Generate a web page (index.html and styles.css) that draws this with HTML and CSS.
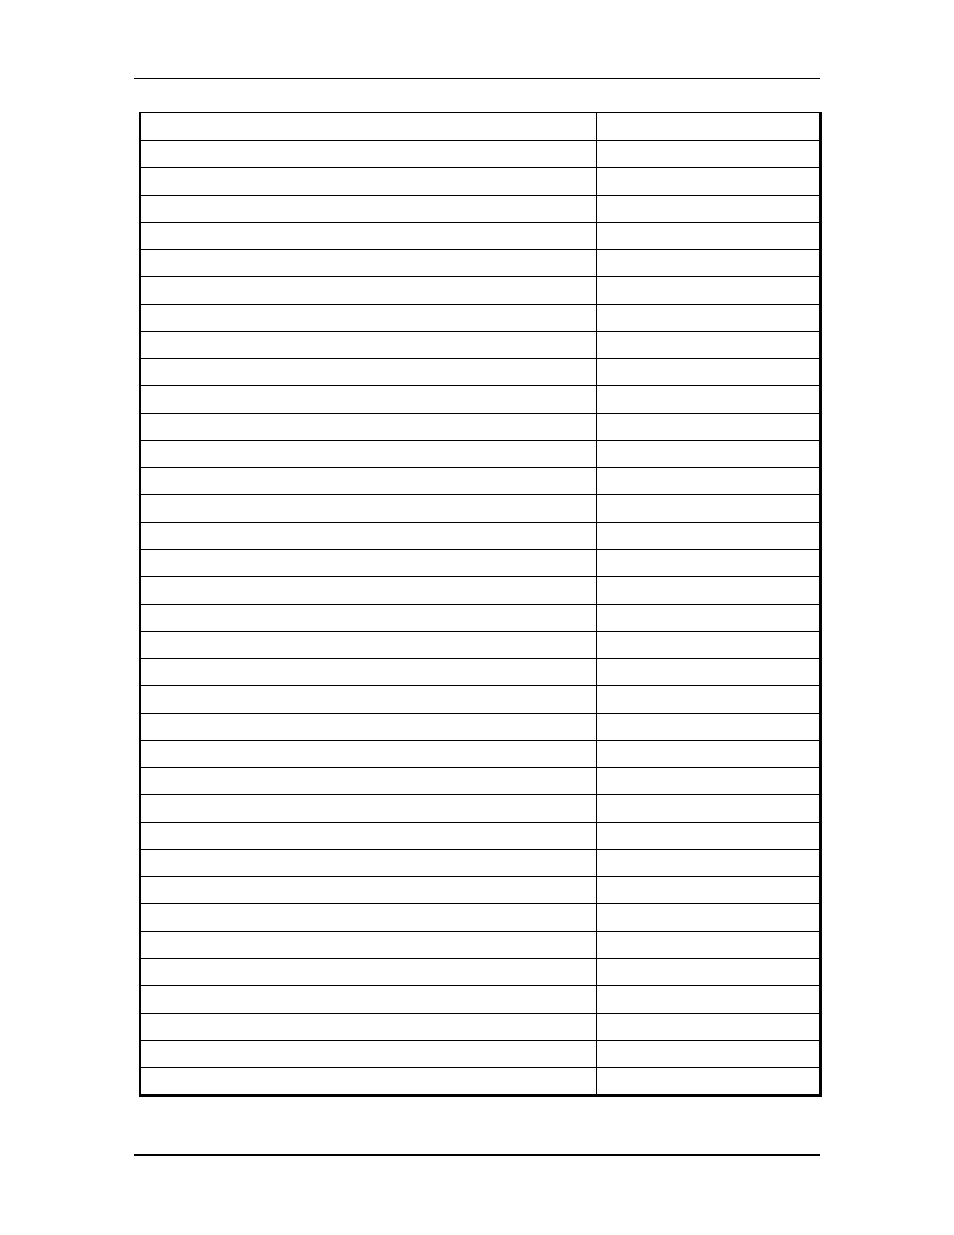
FILE: index.html
```html
<!DOCTYPE html>
<html>
<head>
<meta charset="utf-8">
<link rel="stylesheet" href="styles.css">
</head>
<body>
<div class="page">
  <div class="rule-top"></div>
  <div class="sheet">
    <div class="row"><div class="c1"></div><div class="c2"></div></div>
    <div class="row"><div class="c1"></div><div class="c2"></div></div>
    <div class="row"><div class="c1"></div><div class="c2"></div></div>
    <div class="row"><div class="c1"></div><div class="c2"></div></div>
    <div class="row"><div class="c1"></div><div class="c2"></div></div>
    <div class="row"><div class="c1"></div><div class="c2"></div></div>
    <div class="row"><div class="c1"></div><div class="c2"></div></div>
    <div class="row"><div class="c1"></div><div class="c2"></div></div>
    <div class="row"><div class="c1"></div><div class="c2"></div></div>
    <div class="row"><div class="c1"></div><div class="c2"></div></div>
    <div class="row"><div class="c1"></div><div class="c2"></div></div>
    <div class="row"><div class="c1"></div><div class="c2"></div></div>
    <div class="row"><div class="c1"></div><div class="c2"></div></div>
    <div class="row"><div class="c1"></div><div class="c2"></div></div>
    <div class="row"><div class="c1"></div><div class="c2"></div></div>
    <div class="row"><div class="c1"></div><div class="c2"></div></div>
    <div class="row"><div class="c1"></div><div class="c2"></div></div>
    <div class="row"><div class="c1"></div><div class="c2"></div></div>
    <div class="row"><div class="c1"></div><div class="c2"></div></div>
    <div class="row"><div class="c1"></div><div class="c2"></div></div>
    <div class="row"><div class="c1"></div><div class="c2"></div></div>
    <div class="row"><div class="c1"></div><div class="c2"></div></div>
    <div class="row"><div class="c1"></div><div class="c2"></div></div>
    <div class="row"><div class="c1"></div><div class="c2"></div></div>
    <div class="row"><div class="c1"></div><div class="c2"></div></div>
    <div class="row"><div class="c1"></div><div class="c2"></div></div>
    <div class="row"><div class="c1"></div><div class="c2"></div></div>
    <div class="row"><div class="c1"></div><div class="c2"></div></div>
    <div class="row"><div class="c1"></div><div class="c2"></div></div>
    <div class="row"><div class="c1"></div><div class="c2"></div></div>
    <div class="row"><div class="c1"></div><div class="c2"></div></div>
    <div class="row"><div class="c1"></div><div class="c2"></div></div>
    <div class="row"><div class="c1"></div><div class="c2"></div></div>
    <div class="row"><div class="c1"></div><div class="c2"></div></div>
    <div class="row"><div class="c1"></div><div class="c2"></div></div>
    <div class="row"><div class="c1"></div><div class="c2"></div></div>
  </div>
  <div class="rule-bottom"></div>
</div>
</body>
</html>
```

FILE: styles.css
```css
html, body {
  margin: 0;
  padding: 0;
  background: #ffffff;
  font-family: "Liberation Sans", Arial, sans-serif;
}

.page {
  width: 686px;
  margin-left: 134px;
  padding-top: 78px;
}

.rule-top {
  height: 1px;
  background: #000;
}

.sheet {
  margin-top: 33px;
  margin-left: 5px;
  width: 683px;
  box-sizing: border-box;
  border-top: 1px solid #000;
  border-left: 2px solid #000;
  border-right: 3px solid #000;
  border-bottom: 3px solid #000;
  display: flex;
  flex-direction: column;
}

.row {
  display: grid;
  grid-template-columns: 455px 1fr;
  height: 27.28px;
  box-sizing: border-box;
  border-bottom: 1px solid #000;
}

.row:first-child {
  height: 28px;
}

.row:last-child {
  height: 26px;
  border-bottom: none;
}

.c2 {
  border-left: 1px solid #000;
}

.rule-bottom {
  margin-top: 57px;
  height: 2px;
  background: #000;
}
```
